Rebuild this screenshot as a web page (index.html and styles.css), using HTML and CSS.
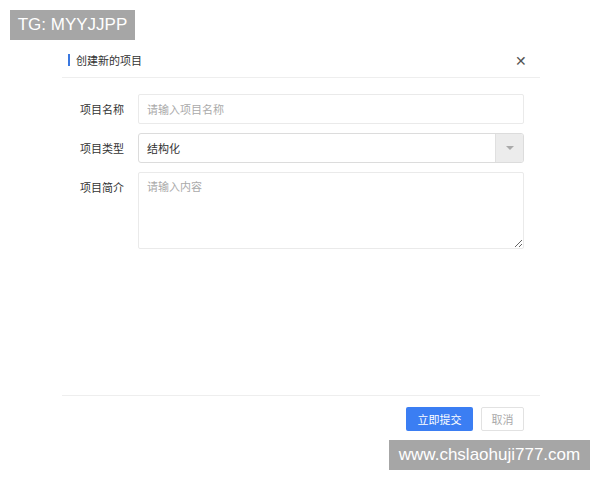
FILE: index.html
```html
<!DOCTYPE html>
<html lang="zh">
<head>
  <title>创建新的项目</title>
  <link rel="stylesheet" href="styles.css">
</head>
<body>
<div class="watermark wm-top">TG: MYYJJPP</div>

<div class="dialog">
  <div class="dialog-header">
    <span class="dialog-title">创建新的项目</span>
    <span class="close">&#x2715;</span>
  </div>

  <div class="dialog-body">
    <div class="form-row">
      <label class="form-label">项目名称</label>
      <input type="text" class="form-input" placeholder="请输入项目名称">
    </div>
    <div class="form-row">
      <label class="form-label">项目类型</label>
      <div class="select">
        <span class="select-value">结构化</span>
        <span class="select-arrow"></span>
      </div>
    </div>
    <div class="form-row">
      <label class="form-label">项目简介</label>
      <textarea class="form-textarea" placeholder="请输入内容"></textarea>
    </div>
  </div>

  <div class="dialog-footer">
    <button class="btn btn-primary">立即提交</button>
    <button class="btn btn-default">取消</button>
  </div>
</div>

<div class="watermark wm-bottom">www.chslaohuji777.com</div>
</body>
</html>
```

FILE: styles.css
```css
body {
  margin: 0;
  width: 600px;
  height: 480px;
  background-color: #fff;
  font-family: "Noto Sans CJK SC", "Noto Sans", sans-serif;
  color: #333;
  position: relative;
  overflow: hidden;
}

.watermark {
  position: absolute;
  background-color: #a6a6a6;
  color: #fff;
  font-family: "Liberation Sans", Arial, sans-serif;
  line-height: 30px;
  text-align: center;
  font-size: 17px;
}

.wm-top {
  left: 10px;
  top: 10px;
  width: 125px;
}

.wm-bottom {
  left: 389px;
  top: 440px;
  width: 201px;
}

.dialog {
  margin: 42px 0 0 62px;
  width: 478px;
}

.dialog-header {
  height: 35px;
  display: flex;
  align-items: center;
  justify-content: space-between;
  padding: 0 13px 0 6px;
  border-bottom: 1px solid #eeeeee;
}

.dialog-title {
  font-size: 11px;
  border-left: 2px solid #3a78e0;
  padding-left: 6px;
  line-height: 12px;
  color: #333;
}

.close {
  font-size: 14px;
  color: #555;
}

.dialog-body {
  height: 301px;
  padding: 16px 16px 0 18px;
  border-bottom: 1px solid #eeeeee;
}

.form-row {
  display: flex;
  margin-bottom: 9px;
}

.form-label {
  width: 58px;
  font-size: 11px;
  line-height: 30px;
  color: #333;
}

.form-input {
  width: 386px;
  height: 30px;
  box-sizing: border-box;
  border: 1px solid #eaeaea;
  border-radius: 2px;
  padding: 0 8px;
  font-size: 11px;
  font-family: inherit;
}

.form-input::placeholder,
.form-textarea::placeholder {
  color: #aaa;
}

.select {
  width: 386px;
  height: 30px;
  box-sizing: border-box;
  border: 1px solid #dcdcdc;
  border-radius: 3px;
  display: flex;
  align-items: center;
  justify-content: space-between;
  overflow: hidden;
}

.select-value {
  font-size: 11px;
  padding-left: 8px;
}

.select-arrow {
  width: 27px;
  height: 100%;
  background-color: #ececec;
  border-left: 1px solid #e0e0e0;
  position: relative;
}

.select-arrow::after {
  content: "";
  position: absolute;
  left: 10px;
  top: 12px;
  border-left: 4px solid transparent;
  border-right: 4px solid transparent;
  border-top: 4px solid #aaa;
}

.form-textarea {
  width: 386px;
  height: 77px;
  box-sizing: border-box;
  border: 1px solid #eaeaea;
  border-radius: 2px;
  padding: 5px 8px;
  font-size: 11px;
  font-family: inherit;
  resize: vertical;
}

.dialog-footer {
  display: flex;
  justify-content: flex-end;
  gap: 8px;
  padding: 11px 16px 0 0;
}

.btn {
  height: 24px;
  border-radius: 2px;
  font-size: 11px;
  font-family: inherit;
  cursor: pointer;
  padding: 0;
}

.btn-primary {
  width: 67px;
  background-color: #3b7ef3;
  color: #fff;
  border: none;
}

.btn-default {
  width: 43px;
  background-color: #fff;
  color: #aaa;
  border: 1px solid #e2e2e2;
}
```
